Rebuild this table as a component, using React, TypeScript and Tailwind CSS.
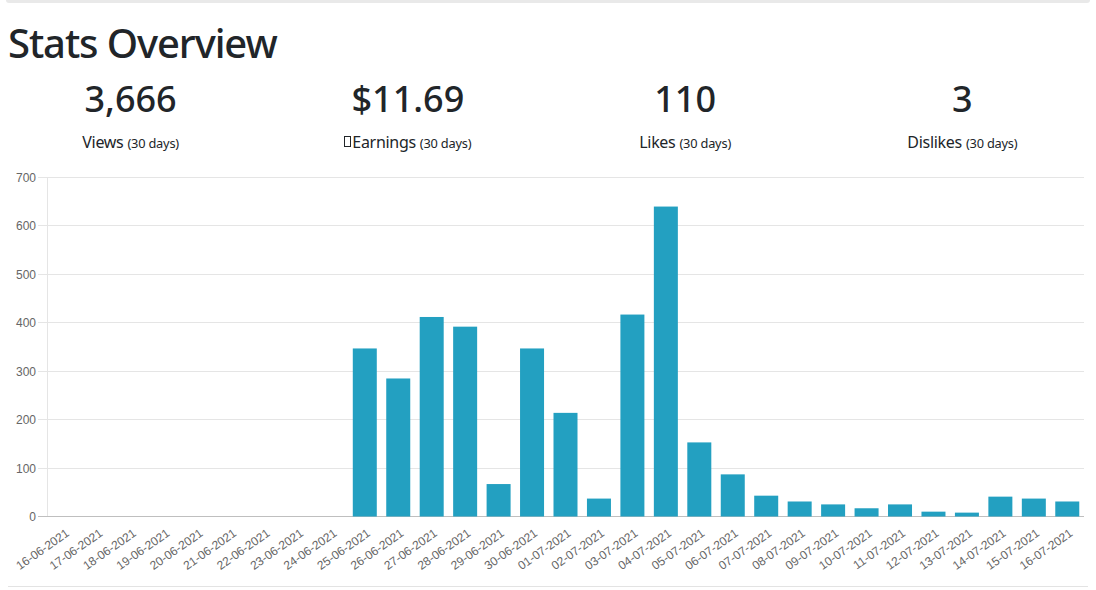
import React from "react";

const labels = [
  "16-06-2021","17-06-2021","18-06-2021","19-06-2021","20-06-2021","21-06-2021","22-06-2021","23-06-2021","24-06-2021","25-06-2021",
  "26-06-2021","27-06-2021","28-06-2021","29-06-2021","30-06-2021","01-07-2021","02-07-2021","03-07-2021","04-07-2021","05-07-2021",
  "06-07-2021","07-07-2021","08-07-2021","09-07-2021","10-07-2021","11-07-2021","12-07-2021","13-07-2021","14-07-2021","15-07-2021","16-07-2021",
];
const values = [0,0,0,0,0,0,0,0,0,347,285,412,392,67,347,214,37,417,640,153,87,43,31,25,17,25,10,8,41,37,31];

function Chart() {
  const W = 1080;
  const H = 420;
  const left = 39;
  const right = 1076;
  const base = 356;
  const scale = 339 / 700;
  const cw = (right - left) / labels.length;
  const ticks = [0, 100, 200, 300, 400, 500, 600, 700];
  return (
    <svg width={W} height={H} viewBox={`0 0 ${W} ${H}`} className="block" style={{ fontFamily: '"Liberation Sans", Arial, sans-serif' }}>
      {ticks.map((t) => {
        const y = Math.round(base - t * scale) + 0.5;
        return (
          <g key={t}>
            <line x1={30} x2={right} y1={y} y2={y} stroke={t === 0 ? "#bfbfbf" : "#e5e5e5"} strokeWidth={1} />
            <text x={28} y={y} dy="0.35em" textAnchor="end" fontSize={12} fill="#666">{t}</text>
          </g>
        );
      })}
      <line x1={left + 0.5} x2={left + 0.5} y1={Math.round(base - 700 * scale)} y2={base} stroke="#e5e5e5" strokeWidth={1} />
      {values.map((v, i) => {
        const cx = left + cw * (i + 0.5);
        const h = v * scale;
        return v > 0 ? <rect key={i} x={cx - 12} y={base + 0.5 - h} width={24} height={h} fill="#23a0c1" /> : null;
      })}
      {labels.map((l, i) => {
        const cx = left + cw * (i + 0.5);
        const ax = cx + 6.3;
        const ay = 375;
        return (
          <text key={l} x={ax} y={ay} textAnchor="end" fontSize={12} fill="#666" transform={`rotate(-35 ${ax} ${ay})`}>
            {l}
          </text>
        );
      })}
    </svg>
  );
}

function Stat({ value, label, tofu }: { value: string; label: string; tofu?: boolean }) {
  return (
    <div className="flex flex-col items-center">
      <div className="text-[36px] leading-[44px] font-medium">{value}</div>
      <div className="mt-[9px] text-[16px] leading-[24px] flex items-baseline">
        {tofu && <span className="inline-block w-[7px] h-[11px] border border-[#212529] mr-[1px] self-center translate-y-[-1px]" />}
        <span className="tracking-[-0.3px]">{label}</span>
        <span className="text-[12.8px] ml-[4px] tracking-[-0.2px]">(30 days)</span>
      </div>
    </div>
  );
}

export default function App() {
  return (
    <div className="w-[1096px] h-[590px] overflow-hidden bg-white text-[#212529] font-['Noto_Sans',sans-serif]">
      <div className="mx-[6px] h-[3px] bg-[#e9e9e9] rounded-b-[3px]" />
      <div className="px-[8px]">
        <h1 className="mt-[16px] text-[40px] leading-[48px] font-medium tracking-[-1.1px]">Stats Overview</h1>
        <div className="mt-[10px] ml-[-16px] w-[1109px] grid grid-cols-4">
          <Stat value="3,666" label="Views" />
          <Stat value="$11.69" label="Earnings" tofu />
          <Stat value="110" label="Likes" />
          <Stat value="3" label="Dislikes" />
        </div>
        <div className="mt-[5px]">
          <Chart />
        </div>
        <div className="mt-[6px] h-px bg-[#e3e3e3]" />
      </div>
    </div>
  );
}
